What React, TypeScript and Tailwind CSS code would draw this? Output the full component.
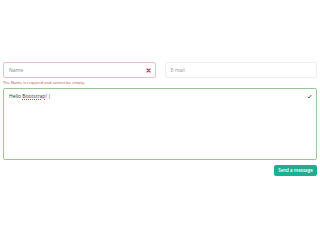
import React from "react";

const App = () => {
  return (
    <div className="w-[320px] h-[240px] bg-white font-['Open_Sans','Liberation_Sans',sans-serif] px-[3px] pt-[62px] leading-[7px]">
      <div className="flex gap-[9px]">
        <div className="flex-1">
          <div className="relative h-[16px] border border-[#e6c0c5] rounded-[2px] flex items-center pl-[5px]">
            <span className="text-[5px] leading-[7px] text-[#888]">Name</span>
            {/* error icon */}
            <svg className="absolute right-[4px] top-[5px]" width="5" height="5" viewBox="0 0 10 10">
              <path d="M2 2 L8 8 M8 2 L2 8" stroke="#c0394b" strokeWidth="2.4" strokeLinecap="square" />
            </svg>
          </div>
          <div className="text-[4px] leading-[5px] text-[#b94a48] mt-[2px]">
            The Name is required and cannot be empty.
          </div>
        </div>
        <div className="flex-1">
          <div className="h-[16px] border border-[#eeeeee] rounded-[2px] flex items-center pl-[5px]">
            <span className="text-[5px] leading-[7px] text-[#999]">E-mail</span>
          </div>
        </div>
      </div>
      <div className="relative mt-[3px] h-[72px] border border-[#95c895] rounded-[2px] px-[5px] pt-[4px]">
        <div className="text-[5px] leading-[7px] text-[#333]">
          Hello{" "}
          <span className="underline decoration-dotted decoration-[#d04848] decoration-1 underline-offset-1">
            Bootstrap!
          </span>{" "}
          |
        </div>
        {/* valid icon */}
        <svg className="absolute right-[4px] top-[5px]" width="5" height="5" viewBox="0 0 10 10">
          <path d="M1.5 5.5 L4 8 L8.5 2" fill="none" stroke="#3c763d" strokeWidth="2" />
        </svg>
      </div>
      <div className="flex justify-end mt-[5px]">
        <button className="h-[11px] w-[43px] bg-[#1fae94] rounded-[2px] text-white text-[4.5px] leading-[5px] font-semibold">
          Send a message
        </button>
      </div>
    </div>
  );
};

export default App;
